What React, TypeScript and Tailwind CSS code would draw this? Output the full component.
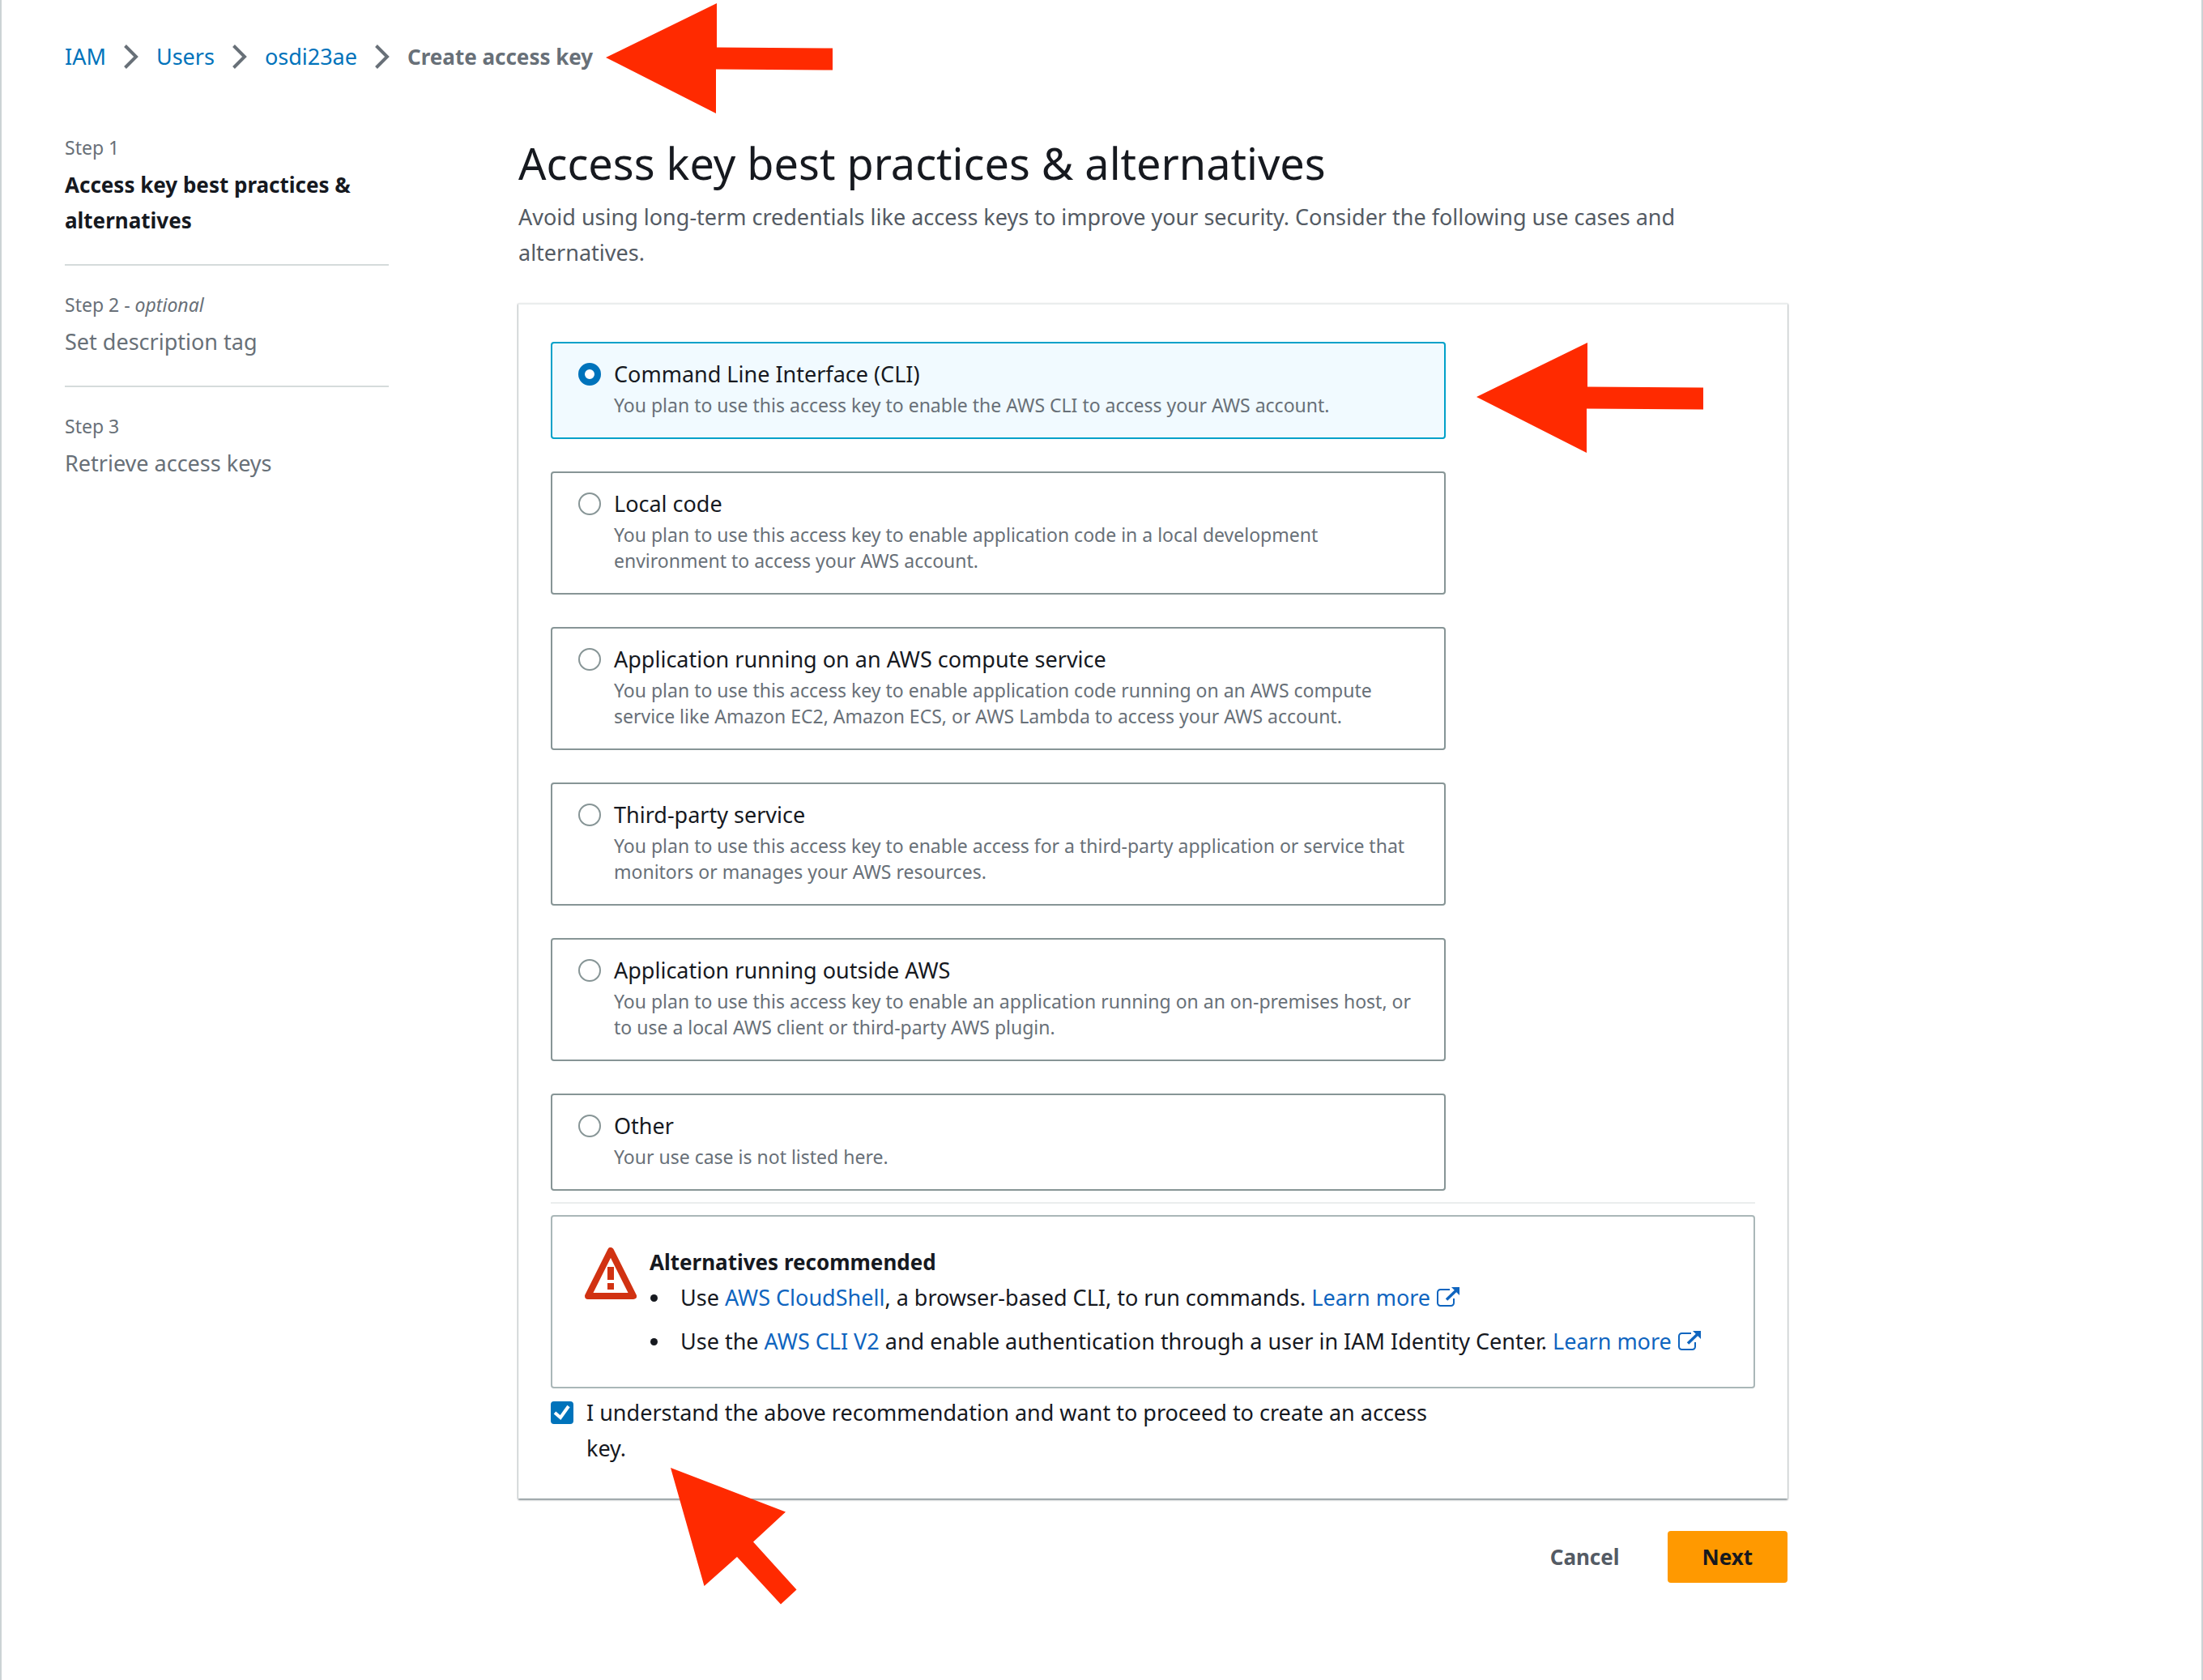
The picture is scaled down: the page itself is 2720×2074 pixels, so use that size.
import { Fragment, useState, type ReactNode } from "react";

const trail = ["IAM", "Users", "osdi23ae"];

const steps = [
  { label: "Step 1", optional: false, title: "Access key best practices & alternatives", current: true },
  { label: "Step 2", optional: true, title: "Set description tag", current: false },
  { label: "Step 3", optional: false, title: "Retrieve access keys", current: false },
];

const useCases = [
  {
    id: "cli",
    title: "Command Line Interface (CLI)",
    text: "You plan to use this access key to enable the AWS CLI to access your AWS account.",
  },
  {
    id: "local",
    title: "Local code",
    text: "You plan to use this access key to enable application code in a local development environment to access your AWS account.",
  },
  {
    id: "compute",
    title: "Application running on an AWS compute service",
    text: "You plan to use this access key to enable application code running on an AWS compute service like Amazon EC2, Amazon ECS, or AWS Lambda to access your AWS account.",
  },
  {
    id: "third-party",
    title: "Third-party service",
    text: "You plan to use this access key to enable access for a third-party application or service that monitors or manages your AWS resources.",
  },
  {
    id: "outside",
    title: "Application running outside AWS",
    text: "You plan to use this access key to enable an application running on an on-premises host, or to use a local AWS client or third-party AWS plugin.",
  },
  { id: "other", title: "Other", text: "Your use case is not listed here." },
];

function Chevron() {
  return (
    <svg aria-hidden="true" viewBox="0 0 18 30" className="h-[30px] w-[18px] shrink-0" fill="none" stroke="#687078" strokeWidth="4">
      <path d="M1.5 1.5 15 15 1.5 28.5" />
    </svg>
  );
}

function LeftArrow({ className }: { className: string }) {
  return (
    <svg aria-hidden="true" viewBox="0 0 280 136" className={"pointer-events-none absolute h-[136px] w-[280px] max-w-none " + className} fill="#ff2a00">
      <path d="M0 67 137 0V54.500L280 55.500V82.500L136 81.500V136Z" />
    </svg>
  );
}

function DiagonalArrow({ className }: { className: string }) {
  return (
    <svg aria-hidden="true" viewBox="0 0 156 169" className={"pointer-events-none absolute h-[169px] w-[156px] max-w-none " + className} fill="#ff2a00">
      <path d="M0 0 142 54.500 102 91.500 155.500 150.500 136 168.500 82 110 41.500 146Z" />
    </svg>
  );
}

function WarningIcon() {
  return (
    <svg aria-hidden="true" viewBox="0 0 64 64" className="mt-1 size-16 shrink-0" fill="none" stroke="#d13212" strokeWidth="8" strokeLinejoin="round">
      <path d="M32 4 60 60H4Z" />
      <path d="M32 24V40M32 44V52" />
    </svg>
  );
}

function ExternalIcon() {
  return (
    <svg aria-hidden="true" viewBox="0 0 28 28" className="ml-2 inline-block size-7 align-[-3px]" fill="none" stroke="currentColor">
      <path strokeWidth="2" d="M16 5H4.500A3.500 3.500 0 0 0 1 8.500V21.500A3.500 3.500 0 0 0 4.500 25H17.500A3.500 3.500 0 0 0 21 21.500V16" />
      <path strokeWidth="3.500" d="M12 17.500 24 6" />
      <path stroke="none" fill="currentColor" d="M18 2H28V12Z" />
    </svg>
  );
}

function TextLink({ children, className = "text-[#0f65bf]" }: { children: ReactNode; className?: string }) {
  return (
    <a href="#" className={"hover:underline " + className}>
      {children}
    </a>
  );
}

export default function App() {
  const [useCase, setUseCase] = useState("cli");
  const [accepted, setAccepted] = useState(true);

  return (
    <div className="min-h-screen overflow-x-hidden border-x-2 border-[#ccd3d5] bg-white px-[78px] pt-12 pb-[120px] font-['Noto_Sans',sans-serif] text-[27px] leading-[44px] text-[#16191f]">
      <nav aria-label="Breadcrumbs" className="relative flex w-fit items-center gap-[22px]">
        {trail.map((name) => (
          <Fragment key={name}>
            <TextLink className="text-[#0073bb]">{name}</TextLink>
            <Chevron />
          </Fragment>
        ))}
        <span aria-current="page" className="text-[26px] font-bold text-[#687078]">
          Create access key
        </span>
        <LeftArrow className="-top-11 left-full ml-4" />
      </nav>

      <div className="mt-[70px] flex gap-40">
        <aside className="w-[400px] shrink-0">
          <ol className="divide-y-2 divide-[#d5dbdb]">
            {steps.map((step) => (
              <li key={step.label} className="pt-7 pb-8 first:pt-0">
                <div className="text-[23px] leading-10 text-[#687078]">
                  {step.label}
                  {step.optional && (
                    <>
                      {" - "}
                      <i>optional</i>
                    </>
                  )}
                </div>
                <div className={step.current ? "mt-1 text-[26px] font-bold" : "mt-1 text-[#687078]"}>{step.title}</div>
              </li>
            ))}
          </ol>
        </aside>

        <main className="max-w-[1567px] min-w-0 flex-1">
          <h1 className="text-[54px] leading-[78px]">Access key best practices &amp; alternatives</h1>
          <p className="mt-[6px] text-[#545b64]">
            Avoid using long-term credentials like access keys to improve your security. Consider the following use cases and alternatives.
          </p>

          <section className="mt-10 border-t-2 border-[#eaeded] bg-white px-10 pt-[46px] pb-10 shadow-[0_2px_2px_0_rgba(0,28,36,0.3),1px_1px_2px_0_rgba(0,28,36,0.2),-1px_1px_2px_0_rgba(0,28,36,0.2)]">
            <fieldset aria-label="Use case" className="flex max-w-[1105px] flex-col gap-10">
              {useCases.map((item) => (
                <label
                  key={item.id}
                  className="relative flex gap-4 rounded-sm border-2 border-[#879596] px-8 pt-4 pb-6 has-[:checked]:border-[#00a1c9] has-[:checked]:bg-[#f1faff]"
                >
                  <input
                    type="radio"
                    name="use-case"
                    checked={useCase === item.id}
                    onChange={() => setUseCase(item.id)}
                    className="mt-2 size-7 shrink-0 appearance-none rounded-full border-2 border-[#879596] bg-white checked:border-8 checked:border-[#0073bb]"
                  />
                  <span className="min-w-0">
                    <span className="block">{item.title}</span>
                    <span className="block text-[23px] leading-8 text-[#687078]">{item.text}</span>
                  </span>
                  {item.id === "cli" && <LeftArrow className="-top-px left-full ml-10" />}
                </label>
              ))}
            </fieldset>

            <hr className="my-[14px] border-t-2 border-[#eaeded]" />

            <div role="alert" className="flex gap-4 rounded-sm border-2 border-[#aab7b8] px-10 py-[34px]">
              <WarningIcon />
              <div>
                <div className="text-[26px] font-bold">Alternatives recommended</div>
                <ul className="flex flex-col gap-[10px]">
                  <li className="flex">
                    <span aria-hidden="true" className="mt-[18px] mr-7 ml-px size-[9px] shrink-0 rounded-full bg-[#16191f]" />
                    <span>
                      Use <TextLink>AWS CloudShell</TextLink>, a browser-based CLI, to run commands.{" "}
                      <TextLink>
                        Learn more
                        <ExternalIcon />
                      </TextLink>
                    </span>
                  </li>
                  <li className="flex">
                    <span aria-hidden="true" className="mt-[18px] mr-7 ml-px size-[9px] shrink-0 rounded-full bg-[#16191f]" />
                    <span>
                      Use the <TextLink>AWS CLI V2</TextLink> and enable authentication through a user in IAM Identity Center.{" "}
                      <TextLink>
                        Learn more
                        <ExternalIcon />
                      </TextLink>
                    </span>
                  </li>
                </ul>
              </div>
            </div>

            <label className="relative mt-2 flex max-w-[1105px] gap-4">
              <span className="relative mt-2 size-7 shrink-0">
                <input
                  type="checkbox"
                  checked={accepted}
                  onChange={(event) => setAccepted(event.target.checked)}
                  className="block size-7 appearance-none rounded-sm border-2 border-[#879596] bg-white checked:border-[#0073bb] checked:bg-[#0073bb]"
                />
                <svg aria-hidden="true" viewBox="0 0 28 28" className="pointer-events-none absolute inset-0 size-7" fill="none" stroke="#fff" strokeWidth="4">
                  <path d="M5 14 12 20 22 6" />
                </svg>
              </span>
              <span>I understand the above recommendation and want to proceed to create an access key.</span>
              <DiagonalArrow className="top-[90px] left-[148px]" />
            </label>
          </section>

          <div className="mt-10 flex justify-end gap-4 text-[26px] font-bold">
            <button type="button" className="h-16 rounded-sm px-[43px] text-[#545b64]">
              Cancel
            </button>
            <button type="button" className="h-16 rounded-sm bg-[#ff9900] px-[43px]">
              Next
            </button>
          </div>
        </main>
      </div>
    </div>
  );
}
